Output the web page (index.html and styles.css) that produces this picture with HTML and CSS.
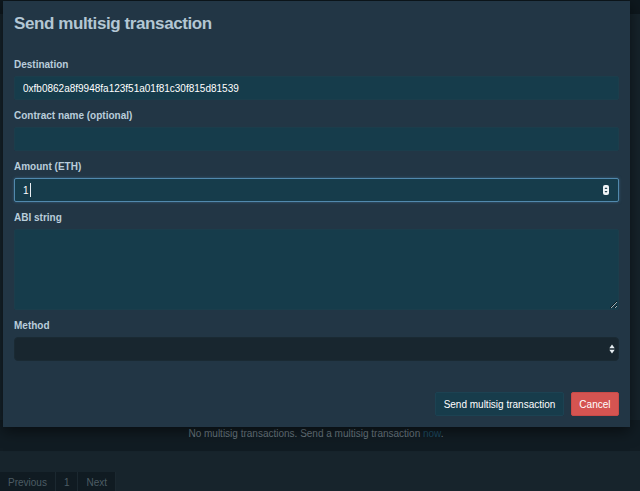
FILE: index.html
```html
<!DOCTYPE html>
<html>
<head>
<meta charset="utf-8">
<link rel="stylesheet" href="styles.css">
</head>
<body>
<div class="page">
  <div class="topbar"></div>
  <div class="main"></div>
  <div class="empty"><p class="msg">No multisig transactions. Send a multisig transaction <a class="link">now</a>.</p></div>
  <div class="gap"></div>
  <nav class="pager">
    <span class="pg">Previous</span>
    <span class="pg">1</span>
    <span class="pg">Next</span>
  </nav>
</div>

<div class="modal">
  <h1 class="title">Send multisig transaction</h1>
  <form class="form">
    <div class="group">
      <label class="label">Destination</label>
      <input class="field" type="text" value="0xfb0862a8f9948fa123f51a01f81c30f815d81539">
    </div>
    <div class="group">
      <label class="label">Contract name (optional)</label>
      <input class="field" type="text" value="">
    </div>
    <div class="group">
      <label class="label">Amount (ETH)</label>
      <div class="field focus">
        <span class="val">1</span><span class="caret"></span>
        <span class="grow"></span>
        <svg class="spin" width="6" height="10" viewBox="0 0 6 10">
          <rect x="0" y="0" width="6" height="10" rx="2" fill="#eef3f6"/>
          <path d="M1.5 4 L3 2.2 L4.5 4 Z" fill="#1a3b48"/>
          <path d="M1.5 6 L3 7.8 L4.5 6 Z" fill="#1a3b48"/>
        </svg>
      </div>
    </div>
    <div class="group">
      <label class="label">ABI string</label>
      <textarea class="field area"></textarea>
    </div>
    <div class="group">
      <label class="label">Method</label>
      <div class="field select">
        <span class="grow"></span>
        <svg class="arrows" width="6" height="10" viewBox="0 0 6 10">
          <path d="M0.3 4.2 L3 0.6 L5.7 4.2 Z" fill="#e6edf1"/>
          <path d="M0.3 5.8 L3 9.4 L5.7 5.8 Z" fill="#e6edf1"/>
        </svg>
      </div>
    </div>
  </form>
  <div class="footer">
    <button class="btn btn-send" type="button">Send multisig transaction</button>
    <button class="btn btn-cancel" type="button">Cancel</button>
  </div>
</div>
</body>
</html>
```

FILE: styles.css
```css
* { box-sizing: border-box; }
html, body {
  margin: 0;
  padding: 0;
  background: #14212a;
  font-family: "Liberation Sans", Arial, sans-serif;
  overflow: hidden;
}
.page {
  width: 640px;
  height: 491px;
  display: flex;
  flex-direction: column;
}
.topbar { height: 14px; background: #0e181e; }
.main { flex: 1; background: #16232b; }
.empty {
  height: 31px;
  background: #111c23;
  display: flex;
  justify-content: center;
  padding-top: 8px;
  padding-right: 8px;
}
.msg {
  margin: 0;
  color: #6e7c85;
  font-size: 10px;
  line-height: 12px;
}
.link { color: #1e4e66; }
.gap { height: 21px; background: #17242c; }
.pager {
  height: 19px;
  background: #17242c;
  display: flex;
}
.pg {
  background: #101b22;
  color: #4c5b64;
  font-size: 10px;
  line-height: 19px;
  padding: 1px 8px 0;
  border-right: 1px solid #1b2830;
}

.modal {
  position: absolute;
  left: 3px;
  top: 1px;
  width: 627px;
  height: 426px;
  background: #223645;
  box-shadow: 0 4px 14px rgba(0, 0, 0, 0.55);
  padding: 13px 11px 11px;
  display: flex;
  flex-direction: column;
}
.title {
  margin: 0;
  font-size: 17px;
  line-height: 20px;
  font-weight: bold;
  letter-spacing: -0.4px;
  color: #b3c7d4;
}
.form {
  margin-top: 25px;
  display: flex;
  flex-direction: column;
  gap: 10px;
}
.group {
  display: flex;
  flex-direction: column;
}
.label {
  font-size: 10px;
  line-height: 12px;
  font-weight: bold;
  color: #b9cddb;
  margin-bottom: 5px;
}
.field {
  height: 24px;
  width: 100%;
  background: #163c4b;
  border: 1px solid #1b3d4b;
  border-radius: 2px;
  color: #ffffff;
  font-family: "Liberation Sans", Arial, sans-serif;
  font-size: 10px;
  padding: 0 9px 0 8px;
  outline: none;
  display: flex;
  align-items: center;
  margin: 0;
}
.focus {
  border-color: #5189ad;
  box-shadow: 0 0 3px rgba(82, 140, 180, 0.55);
  padding-right: 9px;
}
.val { color: #ffffff; }
.caret {
  display: inline-block;
  width: 1px;
  height: 14px;
  background: #e8eef2;
  margin-left: 1px;
}
.grow { flex: 1; }
.spin { display: block; }
.area {
  height: 81px;
  resize: vertical;
  display: block;
  padding: 6px 8px;
}
.select {
  background: #18262f;
  border-color: #1a2a33;
  border-radius: 4px;
  padding-right: 3px;
}
.arrows { display: block; }
.footer {
  margin-top: auto;
  display: flex;
  justify-content: flex-end;
  gap: 7px;
}
.btn {
  height: 24px;
  font-family: "Liberation Sans", Arial, sans-serif;
  font-size: 10px;
  color: #ffffff;
  padding: 0 8px;
  border-radius: 2px;
  margin: 0;
  cursor: pointer;
}
.btn-send {
  background: #173c4b;
  border: 1px solid #1c4252;
  padding: 0 7.5px;
}
.btn-cancel {
  background: #d55451;
  border: 1px solid #c94a47;
  padding: 0 7.5px;
}
```
